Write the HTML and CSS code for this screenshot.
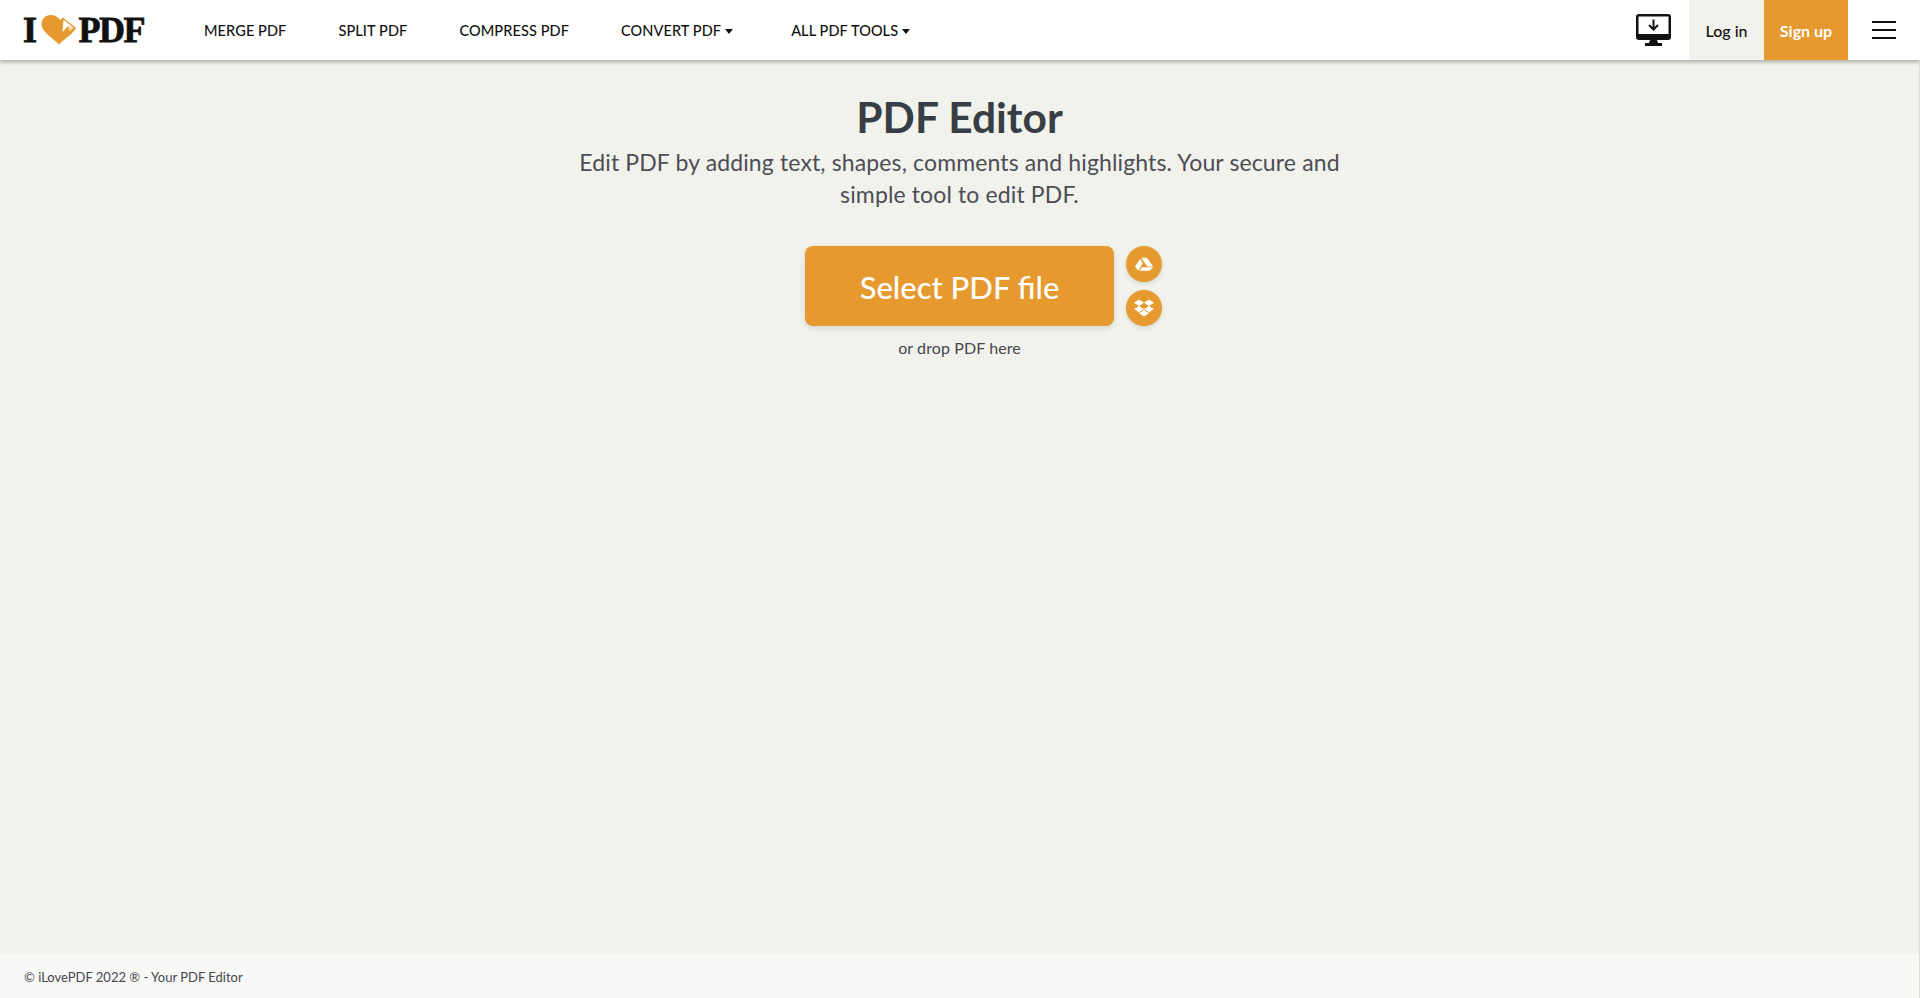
FILE: index.html
```html
<!DOCTYPE html>
<html lang="en">
<head>
    <meta charset="UTF-8">
    <meta name="viewport" content="width=device-width, initial-scale=1.0">
    <title>PDF Editor</title>
    <link rel="stylesheet" href="styles.css">
</head>
<body>
    <header class="topbar">
        <a class="logo" href="#">
            <span>I</span>
            <svg class="logo-heart" viewBox="0 0 36 30" width="36" height="30">
                <path fill="#e5992e" d="M18 29.500 C12 23 0.500 17 0.500 9 C0.500 4 4.500 0 9.500 0 C13.500 0 17 2 19 5 L22 2.500 L35 13 C32 19 23 24 18 29.500 Z"/>
                <path fill="#fff" d="M22.500 4.500 L32.500 13 L28.500 16 L27 11 L21.500 17 Z"/>
                <path fill="#f3cf97" d="M27 11 L32 13.200 L28.500 16 Z"/>
            </svg>
            <span>PDF</span>
        </a>
        <nav class="main-nav">
            <a href="#">MERGE PDF</a>
            <a href="#">SPLIT PDF</a>
            <a href="#">COMPRESS PDF</a>
            <a class="has-caret" href="#">CONVERT PDF<i class="caret"></i></a>
            <a href="#">ALL PDF TOOLS<i class="caret"></i></a>
        </nav>
        <div class="topbar-right">
            <a class="desktop-link" href="#">
                <svg viewBox="0 0 35 32" width="35" height="32">
                    <path fill="#111" fill-rule="evenodd" d="M3 0 H32 Q35 0 35 3 V23 Q35 26 32 26 H3 Q0 26 0 23 V3 Q0 0 3 0 Z M2.500 2.500 V20 H32.500 V2.500 Z"/>
                    <path fill="#111" d="M14 26 H21 L22 29 H26 V32 H9 V29 H13 Z"/>
                    <path fill="none" stroke="#111" stroke-width="2" d="M17.500 5.500 V15 M13 11 L17.500 15.500 L22 11"/>
                </svg>
            </a>
            <a class="login" href="#">Log in</a>
            <a class="signup" href="#">Sign up</a>
            <button class="burger" aria-label="Menu"><span></span><span></span><span></span></button>
        </div>
    </header>

    <main class="tool">
        <h1>PDF Editor</h1>
        <p class="tool-desc">Edit PDF by adding text, shapes, comments and highlights. Your secure and simple tool to edit PDF.</p>
        <div class="upload-row">
            <a class="select-btn" href="#">Select PDF file</a>
            <div class="cloud-btns">
                <a class="cloud-btn" href="#">
                    <svg viewBox="0 0 24 24" width="20" height="20"><path fill="#fff" d="M8.500 4.500 H15.500 L23 15 H16 Z M7.200 6 L10.600 11 L5 20 L1.200 15 Z M9.500 16 H23 L19 20 H6.500 Z"/></svg>
                </a>
                <a class="cloud-btn" href="#">
                    <svg viewBox="0 0 24 24" width="20" height="20"><path fill="#fff" d="M6 1.807L0 5.629l6 3.822 6.001-3.822L6 1.807zM18 1.807l-6 3.822 6 3.822 6-3.822-6-3.822zM0 13.274l6 3.822 6.001-3.822L6 9.452l-6 3.822zM18 9.452l-6 3.822 6 3.822 6-3.822-6-3.822zM6 18.371l6.001 3.822 6-3.822-6-3.822L6 18.371z"/></svg>
                </a>
            </div>
        </div>
        <p class="drop-hint">or drop PDF here</p>
    </main>

    <footer class="footer">© iLovePDF 2022 ® - Your PDF Editor</footer>
</body>
</html>
```

FILE: styles.css
```css
:root {
    --page-bg: #f1f2eb;
    --accent: #e5992e;
    --ink: #111;
    --edge: #dcdcd6;
}

* {
    margin: 0;
    padding: 0;
    box-sizing: border-box;
}

html, body {
    height: 100%;
}

body {
    display: flex;
    flex-direction: column;
    min-height: 100vh;
    overflow: hidden;
    background: var(--page-bg);
    color: #47474f;
    font-family: "Lato", "Open Sans", sans-serif;
}

a {
    color: inherit;
    text-decoration: none;
}

/* top bar */
.topbar {
    display: flex;
    align-items: stretch;
    height: 60px;
    background: #fff;
    box-shadow: 0 2px 4px rgba(0, 0, 0, 0.3);
    color: var(--ink);
}

.logo {
    display: flex;
    align-items: center;
    width: 204px;
    padding-left: 23px;
    font: bold 36px "Liberation Serif", serif;
    letter-spacing: -1.5px;
    -webkit-text-stroke: 0.8px var(--ink);
}

.logo-heart {
    margin: 0 2px 0 5px;
}

.main-nav {
    display: flex;
    align-items: center;
    gap: 52px;
    font-size: 14.5px;
    font-weight: 500;
    letter-spacing: 0.1px;
}

.main-nav a {
    white-space: nowrap;
}

.main-nav .has-caret {
    margin-right: 6px;
}

.caret {
    display: inline-block;
    margin-left: 4px;
    vertical-align: 2px;
    border-top: 5px solid var(--ink);
    border-left: 4.5px solid transparent;
    border-right: 4.5px solid transparent;
}

.topbar-right {
    display: flex;
    align-items: stretch;
    margin-left: auto;
}

.desktop-link {
    display: flex;
    align-items: center;
    padding-right: 18px;
}

.login, .signup {
    display: flex;
    align-items: center;
    justify-content: center;
    font-size: 16px;
    font-weight: 500;
}

.login {
    width: 75px;
    background: var(--page-bg);
}

.signup {
    width: 84px;
    background: var(--accent);
    color: #fff;
    font-weight: 700;
}

.burger {
    display: flex;
    flex-direction: column;
    justify-content: center;
    align-items: center;
    gap: 6px;
    width: 72px;
    border: 0;
    background: none;
}

.burger span {
    width: 24px;
    height: 2px;
    background: var(--ink);
}

/* tool */
.tool {
    flex: 1;
    display: flex;
    flex-direction: column;
    align-items: center;
    padding-top: 30px;
    border-right: 1px solid var(--edge);
    text-align: center;
}

.tool h1 {
    font-size: 42.5px;
    line-height: 54px;
    font-weight: 700;
    color: #383e45;
}

.tool-desc {
    width: 790px;
    margin-top: 2px;
    font-size: 23px;
    line-height: 32px;
    font-weight: 400;
    letter-spacing: 0.13px;
    color: #4d4d55;
}

.upload-row {
    display: grid;
    grid-template-columns: 1fr 309px 1fr;
    column-gap: 12px;
    width: 100%;
    margin-top: 36px;
}

.select-btn {
    grid-column: 2;
    display: flex;
    align-items: center;
    justify-content: center;
    height: 80px;
    padding-top: 2px;
    border-radius: 8px;
    background: var(--accent);
    box-shadow: 0 2px 6px rgba(0, 0, 0, 0.12);
    color: #fff;
    font-size: 31px;
    font-weight: 500;
}

.cloud-btns {
    display: flex;
    flex-direction: column;
    gap: 8px;
}

.cloud-btn {
    display: flex;
    align-items: center;
    justify-content: center;
    width: 36px;
    height: 36px;
    border-radius: 50%;
    background: var(--accent);
    box-shadow: 0 2px 4px rgba(0, 0, 0, 0.12);
}

.drop-hint {
    margin-top: 12px;
    font-size: 16px;
    line-height: 20px;
    letter-spacing: 0.1px;
}

/* footer */
.footer {
    height: 44px;
    padding-left: 24px;
    border-right: 1px solid var(--edge);
    background: #f8f8f6;
    font-size: 13px;
    line-height: 46px;
}
```
